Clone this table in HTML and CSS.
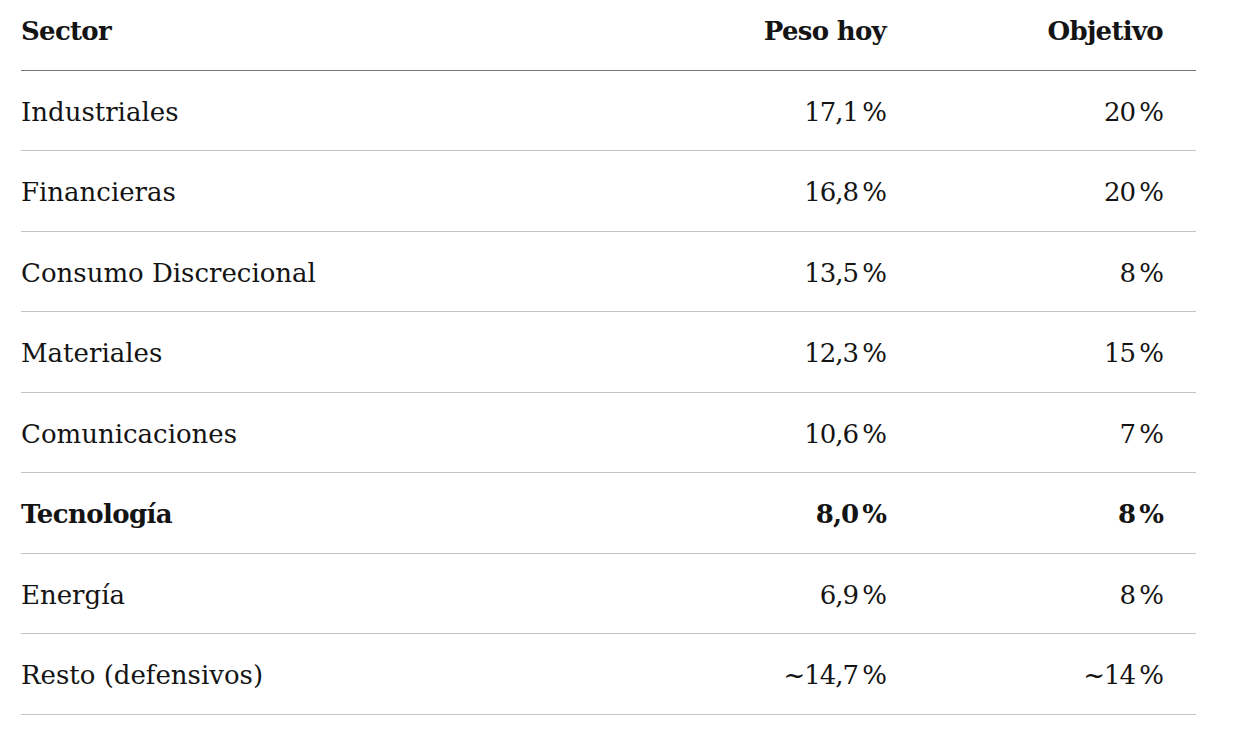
FILE: index.html
```html
<!DOCTYPE html>
<html lang="es">
<head>
<meta charset="utf-8">
<title>Sectores</title>
<link rel="stylesheet" href="styles.css">
</head>
<body>
<div class="wrap">
<table class="sectors">
  <colgroup>
    <col class="c-sector">
    <col class="c-num">
    <col class="c-num">
  </colgroup>
  <thead>
    <tr><th class="name">Sector</th><th class="num">Peso hoy</th><th class="num">Objetivo</th></tr>
  </thead>
  <tbody>
    <tr><td class="name">Industriales</td><td class="num">17,1&#8201;%</td><td class="num">20&#8201;%</td></tr>
    <tr><td class="name">Financieras</td><td class="num">16,8&#8201;%</td><td class="num">20&#8201;%</td></tr>
    <tr><td class="name">Consumo Discrecional</td><td class="num">13,5&#8201;%</td><td class="num">8&#8201;%</td></tr>
    <tr><td class="name">Materiales</td><td class="num">12,3&#8201;%</td><td class="num">15&#8201;%</td></tr>
    <tr><td class="name">Comunicaciones</td><td class="num">10,6&#8201;%</td><td class="num">7&#8201;%</td></tr>
    <tr class="strong"><td class="name">Tecnología</td><td class="num">8,0&#8201;%</td><td class="num">8&#8201;%</td></tr>
    <tr><td class="name">Energía</td><td class="num">6,9&#8201;%</td><td class="num">8&#8201;%</td></tr>
    <tr><td class="name">Resto (defensivos)</td><td class="num">~14,7&#8201;%</td><td class="num">~14&#8201;%</td></tr>
  </tbody>
</table>
</div>
</body>
</html>
```
FILE: styles.css
```css
html, body {
  margin: 0;
  padding: 0;
  background: #ffffff;
}
.wrap {
  padding: 0 0 0 21px;
}
.sectors {
  width: 1175px;
  border-collapse: collapse;
  font-family: "DejaVu Serif", "Liberation Serif", serif;
  font-size: 26px;
  color: #141414;
}
.c-sector { width: 621px; }
.c-num { width: 277px; }
.sectors th {
  height: 70px;
  padding: 0 33px 8px 0;
  font-weight: bold;
  border-bottom: 1.5px solid #777777;
  vertical-align: middle;
  letter-spacing: -0.7px;
  box-sizing: border-box;
}
.sectors td {
  height: 80.5px;
  padding: 3px 33px 0 0;
  border-bottom: 1px solid #c4c4c4;
  vertical-align: middle;
  box-sizing: border-box;
}
.sectors .name { text-align: left; }
.sectors .num { text-align: right; white-space: nowrap; }
.sectors td.num { letter-spacing: -1px; }
.sectors tr.strong td { font-weight: bold; letter-spacing: -0.6px; }
.sectors tr.strong td.num { letter-spacing: -1px; }
```
